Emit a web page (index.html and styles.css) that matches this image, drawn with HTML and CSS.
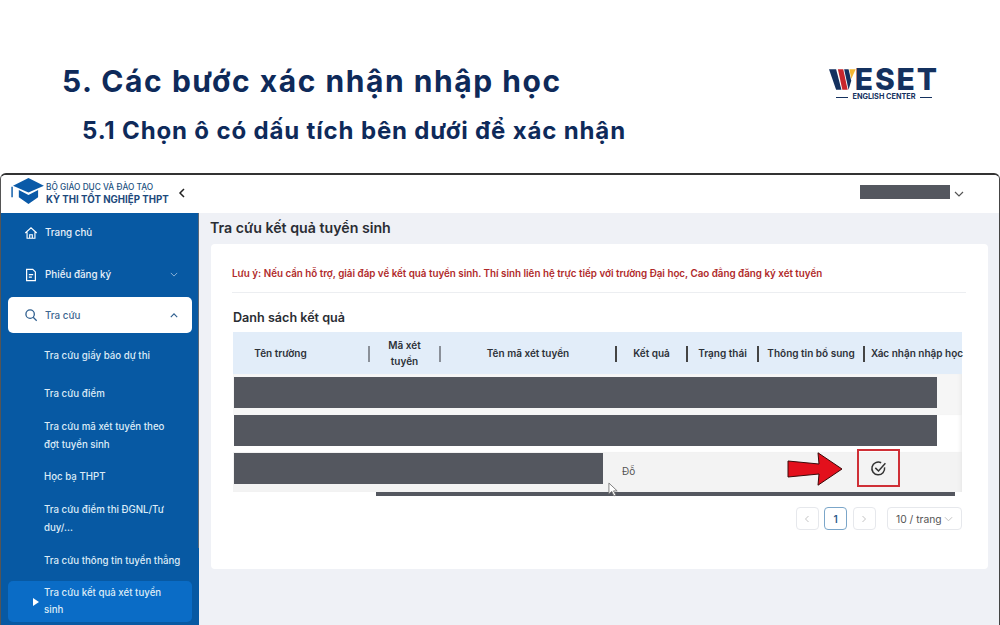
FILE: index.html
```html
<!DOCTYPE html>
<html lang="vi">
<head>
<meta charset="utf-8">
<title>Các bước xác nhận nhập học</title>
<link rel="stylesheet" href="styles.css">
</head>
<body>
<div class="slide">
  <header class="slide-head">
    <div class="titles">
      <h1>5. Các bước xác nhận nhập học</h1>
      <h2>5.1 Chọn ô có dấu tích bên dưới để xác nhận</h2>
    </div>
    <div class="logo">
      <div class="logo-main">
        <svg class="logo-w" viewBox="0 0 30 23" width="30" height="23"><path d="M0 0h8l6 23H8z" fill="#14315f"/><path d="M10 0h6l5 23h-6z" fill="#c8262c"/><path d="M17 0h5l3 13-3 10z" fill="#14315f"/><path d="M23 0h7l-5 11z" fill="#f2b632"/></svg>
        <span>ESET</span>
      </div>
      <div class="logo-sub"><i></i><span>ENGLISH CENTER</span><i></i></div>
    </div>
  </header>

  <div class="app">
    <div class="app-top">
      <div class="brand">
        <svg class="cap" viewBox="0 0 34 28" width="33" height="27"><path d="M18 0 34 8 18 15 2 8z" fill="#0a5aa8"/><path d="M8 12.500 18 17.500 28 12.500V20L18 27 8 20z" fill="#0a5aa8"/><path d="M1 9v11" stroke="#0a5aa8" stroke-width="1.500"/></svg>
        <div class="brand-text">
          <div class="brand-top">BỘ GIÁO DỤC VÀ ĐÀO TẠO</div>
          <div class="brand-bottom">KỲ THI TỐT NGHIỆP THPT</div>
        </div>
        <svg class="collapse" viewBox="0 0 8 10" width="8" height="10"><path d="M6 1 2 5l4 4" fill="none" stroke="#222" stroke-width="1.500"/></svg>
      </div>
      <div class="user">
        <div class="user-mask"></div>
        <svg viewBox="0 0 10 6" width="10" height="6"><path d="M1 1l4 4 4-4" fill="none" stroke="#555" stroke-width="1.200"/></svg>
      </div>
    </div>

    <div class="app-body">
      <nav class="side">
        <a class="nav-item first">
          <svg viewBox="0 0 16 16" width="14" height="14"><path d="M1.500 8 8 2l6.500 6M3.500 7v7h9V7M6.500 14v-4h3v4" fill="none" stroke="#fff" stroke-width="1.300"/></svg>
          <span>Trang chủ</span>
        </a>
        <a class="nav-item second">
          <svg viewBox="0 0 16 16" width="14" height="14"><path d="M3 1.500h7l3 3v10H3zM5.500 7.500h5M5.500 10.500h3.500" fill="none" stroke="#fff" stroke-width="1.400"/></svg>
          <span>Phiếu đăng ký</span>
          <svg class="caret" viewBox="0 0 10 6" width="8" height="5"><path d="M1 1l4 4 4-4" fill="none" stroke="#8fb4d8" stroke-width="1.200"/></svg>
        </a>
        <a class="nav-item open">
          <svg viewBox="0 0 16 16" width="14" height="14"><circle cx="7" cy="7" r="4.800" fill="none" stroke="#2f5f8f" stroke-width="1.500"/><path d="m10.500 10.500 4 4" stroke="#2f5f8f" stroke-width="1.500"/></svg>
          <span>Tra cứu</span>
          <svg class="caret" viewBox="0 0 10 6" width="8" height="5"><path d="M1 5l4-4 4 4" fill="none" stroke="#2f5f8f" stroke-width="1.400"/></svg>
        </a>
        <ul class="sub">
          <li class="s1">Tra cứu giấy báo dự thi</li>
          <li class="s2">Tra cứu điểm</li>
          <li class="s3">Tra cứu mã xét tuyển theo đợt tuyển sinh</li>
          <li class="s4">Học bạ THPT</li>
          <li class="s5">Tra cứu điểm thi ĐGNL/Tư duy/...</li>
          <li class="s6">Tra cứu thông tin tuyển thẳng</li>
          <li class="current">Tra cứu kết quả xét tuyển sinh</li>
        </ul>
      </nav>

      <main class="content">
        <h3 class="page-title">Tra cứu kết quả tuyển sinh</h3>
        <section class="card">
          <p class="notice">Lưu ý: Nếu cần hỗ trợ, giải đáp về kết quả tuyển sinh. Thí sinh liên hệ trực tiếp với trường Đại học, Cao đẳng đăng ký xét tuyển</p>
          <h4 class="list-title">Danh sách kết quả</h4>
          <div class="table">
            <div class="thead">
              <div class="th c1">Tên trường</div>
              <div class="th c2">Mã xét tuyển</div>
              <div class="th c3">Tên mã xét tuyển</div>
              <div class="th c4">Kết quả</div>
              <div class="th c5">Trạng thái</div>
              <div class="th c6">Thông tin bổ sung</div>
              <div class="th c7">Xác nhận nhập học</div>
            </div>
            <div class="row r1"><div class="mask wide"></div></div>
            <div class="row r2"><div class="mask wide"></div></div>
            <div class="row r3">
              <div class="mask short"></div>
              <span class="result">Đỗ</span>
              <svg class="arrow" viewBox="0 0 56 34" width="56" height="34"><path d="M1 9 32 12 31 .8 55 17 31 33.200 32 22 1 25z" fill="#e3101c" stroke="#3a0a0a" stroke-width="1"/></svg>
              <div class="confirm">
                <svg viewBox="0 0 16 16" width="17" height="17"><path d="M13.700 7A6 6 0 1 1 10.500 2.600" fill="none" stroke="#333" stroke-width="1.400"/><path d="M5 7.400 8 10.300 14.500 3" fill="none" stroke="#333" stroke-width="1.400"/></svg>
              </div>
            </div>
            <div class="scrollbar"><div class="thumb"></div></div>
          </div>
          <div class="pager">
            <button class="pg"><svg viewBox="0 0 8 10" width="6" height="8"><path d="M6 1 2 5l4 4" fill="none" stroke="#bbb" stroke-width="1.200"/></svg></button>
            <button class="pg active">1</button>
            <button class="pg"><svg viewBox="0 0 8 10" width="6" height="8"><path d="M2 1l4 4-4 4" fill="none" stroke="#bbb" stroke-width="1.200"/></svg></button>
            <div class="size"><span>10 / trang</span><svg viewBox="0 0 10 6" width="9" height="6"><path d="M1 1l4 4 4-4" fill="none" stroke="#bbb" stroke-width="1"/></svg></div>
          </div>
        </section>
      </main>
    </div>
  </div>

  <svg class="cursor" viewBox="0 0 12 16" width="11" height="15"><path d="M1 1v12l3-3 2.500 5 2-1L6 9.500h4z" fill="#fff" stroke="#777" stroke-width="1"/></svg>
</div>
</body>
</html>
```
FILE: styles.css
```css
* { box-sizing: border-box; }
html, body { margin: 0; padding: 0; }
body { width: 1000px; height: 625px; overflow: hidden; background: #fff; font-family: "Inter", "Liberation Sans", sans-serif; }
.slide { position: relative; width: 1000px; height: 625px; overflow: hidden; }

.slide-head { height: 173px; display: flex; justify-content: space-between; padding: 62px 61px 0 62px; }
.titles h1 { margin: 0; font: 700 30px/38px "Inter", sans-serif; color: #0e2a5a; letter-spacing: 1.550px; white-space: nowrap; }
.titles h2 { margin: 16px 0 0 20px; font: 700 24px/30px "Inter", sans-serif; color: #0e2a5a; letter-spacing: 0.850px; white-space: nowrap; }
.logo { width: 110px; margin-top: 5px; color: #14315f; }
.logo-main { display: flex; align-items: center; height: 24px; }
.logo-main span { font: 800 30px/24px "Inter", sans-serif; margin-left: -1px; letter-spacing: 1.900px; }
.logo-sub { display: flex; align-items: center; justify-content: center; gap: 4px; margin-top: 2px; font: 700 7.300px/8px "Inter", sans-serif; white-space: nowrap; }
.logo-sub i { flex: none; width: 12px; height: 1px; background: #14315f; }

.app { height: 452px; border-top: 2px solid #333; border-right: 1px solid #444; border-left: 1px solid #555; border-radius: 6px 6px 0 0; overflow: hidden; background: #eff1f6; }
.app-top { height: 38px; display: flex; justify-content: space-between; align-items: center; background: #fff; }
.brand { display: flex; align-items: center; margin-left: 10px; }
.cap { margin-bottom: 5px; }
.brand-text { margin-left: 2px; }
.brand-top { font-size: 8.300px; line-height: 12px; font-weight: 500; color: #23527f; }
.brand-bottom { font-size: 9.700px; line-height: 14px; font-weight: 700; color: #1e4a7c; white-space: nowrap; }
.collapse { margin-left: 9px; margin-bottom: 2px; }
.user { display: flex; align-items: center; gap: 4px; margin-right: 35px; }
.user-mask { width: 90px; height: 14px; margin-bottom: 4px; background: #54575f; }

.app-body { display: flex; height: 412px; }
.side { width: 198px; flex: none; background: linear-gradient(#5a6878, #5a6878) right top / 1px 335px no-repeat, #0759a3; color: #fff; padding: 0 7px; }
.nav-item { display: flex; align-items: center; padding-left: 16px; gap: 7px; font-size: 9.800px; font-weight: 500; color: #e9f1f9; }
.nav-item.first { height: 39px; }
.nav-item.second { height: 45px; }
.nav-item .caret { margin-left: auto; margin-right: 14px; }
.nav-item.open { height: 36px; background: #fff; border-radius: 5px; color: #3c6690; }
.sub { list-style: none; margin: 0; padding: 0 0 0 36px; font-size: 9.700px; font-weight: 500; line-height: 17.500px; color: #dcebf7; }
.s1 { margin-top: 14px; padding-right: 8px; }
.s2 { margin-top: 20.500px; padding-right: 8px; }
.s3 { margin-top: 15.500px; padding-right: 22px; }
.s4 { margin-top: 15px; padding-right: 8px; }
.s5 { margin-top: 15.500px; padding-right: 8px; }
.s6 { margin-top: 16px; }
.sub .current { position: relative; margin: 11px 0 0 -36px; padding: 3px 16px 3px 36px; background: #0a6cc6; border-radius: 5px; }
.current::before { content: ""; position: absolute; left: 25px; top: 17px; border-left: 6px solid #fff; border-top: 4px solid transparent; border-bottom: 4px solid transparent; }

.content { flex: 1; padding: 0 0 0 12px; min-width: 0; }
.page-title { margin: 5px 0 6px -1px; font-size: 14.200px; line-height: 20px; font-weight: 600; color: #2a2d33; }
.card { width: 777px; height: 325px; background: #fff; border-radius: 4px; padding: 21px 22px 0 21px; }
.notice { margin: 0; padding: 0 0 10px 0; border-bottom: 1px solid #eceef1; font-size: 9.800px; line-height: 17px; font-weight: 600; color: #b02a2a; white-space: nowrap; }
.list-title { margin: 16px 0 5px 1px; font-size: 12.600px; line-height: 18px; font-weight: 600; color: #2a2d33; }
.table { position: relative; width: 729px; height: 164px; margin-left: 1px; }
.thead { display: flex; height: 42px; padding-top: 1px; align-items: center; background: #e2edf9; font-size: 10px; line-height: 15.500px; font-weight: 600; color: #2d3138; }
.th { position: relative; text-align: center; flex: none; white-space: nowrap; }
.th + .th::before { content: ""; position: absolute; left: -1px; top: 50%; height: 16px; margin-top: -8px; width: 1.500px; background: #444; }
.c2::before, .c3::before { background: #8a9099 !important; }
.c1 { width: 136px; padding-right: 41px; }
.c2 { width: 71px; white-space: normal; padding: 0 14px; }
.c3 { width: 176px; }
.c4 { width: 71px; }
.c5 { width: 71px; }
.c6 { width: 106px; }
.c7 { width: 98px; padding-left: 7px; }
.row { position: relative; display: flex; align-items: flex-start; box-shadow: inset -4px 0 4px -3px #e6e6e6; }
.r1 { height: 41px; padding-top: 3px; background: #f6f6f6; }
.r2 { height: 37px; background: #fff; }
.r3 { height: 40px; padding-top: 1px; background: #f3f3f3; }
.mask { background: #54575f; height: 30.500px; margin-left: 1px; }
.mask.wide { width: 703px; }
.mask.short { width: 369px; }
.result { position: absolute; left: 389px; top: 12px; font-size: 10px; line-height: 14px; color: #555; }
.arrow { position: absolute; left: 554px; top: 0; }
.confirm { position: absolute; left: 624px; top: -3px; width: 43px; height: 38px; display: flex; align-items: center; justify-content: center; border: 2px solid #cf2f36; }
.scrollbar { height: 4px; padding-left: 143px; }
.thumb { width: 579px; height: 4px; background: #54575f; }

.pager { display: flex; align-items: center; justify-content: flex-end; gap: 5.500px; margin: 11px 0 0 1px; width: 729px; }
.pg { width: 23px; height: 23px; padding: 0; display: flex; align-items: center; justify-content: center; background: #fff; border: 1px solid #e6e8ec; border-radius: 4px; font: 600 10px "Inter", sans-serif; color: #2c5a88; }
.pg.active { border-color: #7ba6c9; }
.size { width: 75px; height: 23px; margin-left: 6px; display: flex; align-items: center; justify-content: space-between; padding: 0 8px; border: 1px solid #e6e8ec; border-radius: 4px; font-size: 10.300px; color: #555; white-space: nowrap; }

.cursor { position: absolute; left: 608px; top: 482px; }
```
